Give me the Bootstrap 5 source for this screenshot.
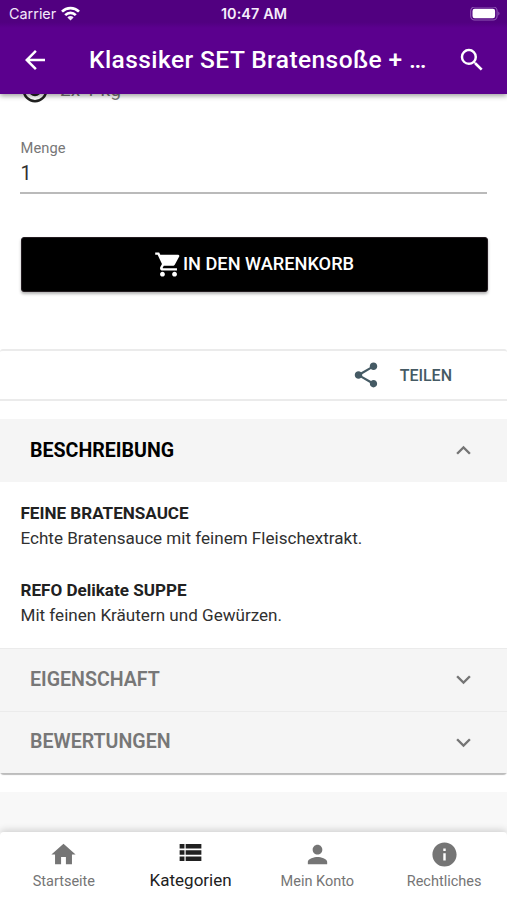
<!DOCTYPE html>
<html lang="de">
<head>
<meta charset="utf-8">
<meta name="viewport" content="width=device-width, initial-scale=1">
<title>Klassiker SET Bratensoße</title>
<link href="https://cdn.jsdelivr.net/npm/bootstrap@5.3.0/dist/css/bootstrap.min.css" rel="stylesheet">
<style>
body{font-family:Roboto,"Liberation Sans",sans-serif;color:#303030;line-height:1}
svg{display:block;flex:none;fill:currentColor}
.app-shell{width:507px;height:900px}
.app-header{height:94px;background:#5b008e;box-shadow:0 2px 5px rgba(0,0,0,.38);z-index:3}
.status-bar{height:28px;background:linear-gradient(#510080 80%,#5b008e);font:500 15px/28px Inter,sans-serif;padding:0 7px 0 9px;color:#f3e8fa}
.side-slot{flex:1 1 0}
.clock{font-weight:600;color:#f6eefb;font-size:14.4px;letter-spacing:.1px;margin-right:1px}
.carrier{font-size:14.4px;font-weight:400;letter-spacing:0}
.title-row{height:64px;padding:0 20px}
.page-title{font-size:24.5px;font-weight:500;letter-spacing:.43px;line-height:32px;margin-left:39px}
.page-main{background:#fff}
.option-row{height:28px;margin-top:-18px;padding-left:20px;gap:10px;font-size:19.2px;color:#757575}
.qty{margin:36px 20px 0;height:54px;border-bottom:2px solid #bababa;padding-left:.5px}
.qty-label{font-size:14.7px;color:#777;letter-spacing:.1px;line-height:16px}
.qty-value{font-size:19.6px;line-height:24px;margin-top:6px;color:#303030}
.cart-btn{margin:43px 19.5px 0 20.5px;height:54.5px;border:1px solid #231b20;border-radius:3px;background:#000;color:#fff;font-size:18.2px;font-weight:500;box-shadow:0 2px 3px rgba(0,0,0,.3)}
.share-row{margin-top:57.5px;height:52px;border-top:2px solid #ebebeb;border-bottom:2px solid #ebebeb;border-radius:3px 3px 0 0;padding-right:55px;color:#455a64;font-size:16px;font-weight:500;gap:19px}
.share-row span{padding-top:1px}
.panels{margin-top:18px;box-shadow:0 2px 1px #bcbcbc;border-radius:0 0 4px 4px}
.panel-head{height:62.5px;background:#f5f5f5;padding:0 29.5px 0 30px;font-size:19.6px;font-weight:600;color:#777}
.panel-head.open{height:63px;font-weight:700;color:#000}
.panel-head + .panel-head,.panel-body + .panel-head{border-top:1px solid #ebebeb}
.panel-head svg{color:#757575}
.panel-body{height:166px;padding:18.5px 20.5px 0;font-size:17.07px;line-height:25.7px}
.panel-body strong{color:#212121}
.next-block{margin-top:18.5px;height:60px;background:#f8f8f8}
.tabs-bar{height:68.5px;background:#fff;z-index:3;box-shadow:0 -2px 7px rgba(0,0,0,.16);border-radius:4px 4px 0 0;color:#757575;font-size:14.5px}
.tab-item{flex:1 1 0;padding:8px 0 0 1px}
.tab-item span{line-height:18px;margin-top:4px}
.tab-item.current{color:#212121;padding-top:6px}
.tab-item.current span{font-size:17px}
</style>
<script src="https://cdn.jsdelivr.net/npm/bootstrap@5.3.0/dist/js/bootstrap.bundle.min.js"></script>
</head>
<body>
<div class="app-shell d-flex flex-column overflow-hidden">
  <header class="app-header position-relative flex-shrink-0 text-white">
    <div class="status-bar d-flex align-items-center">
      <div class="side-slot d-flex align-items-center gap-1"><span class="carrier">Carrier</span>
        <svg width="21" height="16" viewBox="0 0 21 16" fill="none"><g fill="none" stroke="#fff" stroke-width="2.7"><path d="M2 5.6a12.2 12.2 0 0 1 17 0M5.2 9.1a7.6 7.6 0 0 1 10.6 0"/></g><path d="M10.5 14.4 7.4 11.4a4.4 4.4 0 0 1 6.2 0z"/></svg></div>
      <span class="clock">10:47 AM</span>
      <div class="side-slot d-flex justify-content-end">
        <svg width="30" height="15" viewBox="0 0 30 15"><rect x=".7" y="0" width="26.4" height="13" rx="4" fill="none" stroke="#9058b4" stroke-width="1.1"/><rect x="2.5" y="1.8" width="22.6" height="9.4" rx="2.2" fill="#fff"/><path d="M28.3 4.5a2.3 2.3 0 0 1 0 4z" fill="#9058b4"/></svg></div>
    </div>
    <div class="title-row d-flex align-items-center">
      <svg width="30" height="30" viewBox="0 0 24 24"><path d="M20 11H7.83l5.59-5.59L12 4l-8 8 8 8 1.41-1.41L7.83 13H20v-2z"/></svg>
      <h1 class="page-title mb-0 text-nowrap">Klassiker SET Bratensoße + …</h1>
      <svg class="ms-auto" width="30" height="30" viewBox="0 0 24 24"><path d="M15.5 14h-.79l-.28-.27A6.471 6.471 0 0 0 16 9.5 6.5 6.5 0 1 0 9.5 16c1.61 0 3.09-.59 4.23-1.57l.27.28v.79l5 4.99L20.49 19l-4.99-5zm-6 0C7.01 14 5 11.99 5 9.5S7.01 5 9.5 5 14 7.01 14 9.5 11.99 14 9.5 14z"/></svg>
    </div>
  </header>
  <main class="page-main flex-grow-1 overflow-hidden">
    <div class="option-row d-flex align-items-center">
      <svg width="30" height="30" viewBox="0 0 24 24" color="#212121"><path d="M12 7a5 5 0 1 0 0 10 5 5 0 0 0 0-10zm0-5a10 10 0 1 0 0 20 10 10 0 0 0 0-20zm0 18a8 8 0 1 1 0-16 8 8 0 0 1 0 16z"/></svg>
      <span>2x 1 kg</span>
    </div>
    <div class="qty"><div class="qty-label">Menge</div><div class="qty-value">1</div></div>
    <div class="cart-btn d-flex align-items-center justify-content-center">
      <svg width="29" height="29" viewBox="0 0 24 24"><path d="M7 18c-1.1 0-1.99.9-1.99 2S5.9 22 7 22s2-.9 2-2-.9-2-2-2zM1 2v2h2l3.6 7.59-1.35 2.45c-.16.28-.25.61-.25.96 0 1.1.9 2 2 2h12v-2H7.42c-.14 0-.25-.11-.25-.25l.03-.12.9-1.63h7.45c.75 0 1.41-.41 1.75-1.03l3.58-6.49A1.003 1.003 0 0 0 20 4H5.21l-.94-2H1zm16 16c-1.1 0-1.99.9-1.99 2s.89 2 1.99 2 2-.9 2-2-.9-2-2-2z"/></svg>
      <span>IN DEN WARENKORB</span>
    </div>
    <div class="share-row d-flex align-items-center justify-content-end">
      <svg width="30" height="30" viewBox="0 0 24 24"><path d="M18 16.08c-.76 0-1.44.3-1.96.77L8.91 12.7c.05-.23.09-.46.09-.7s-.04-.47-.09-.7l7.05-4.11c.54.5 1.25.81 2.04.81 1.66 0 3-1.34 3-3s-1.34-3-3-3-3 1.34-3 3c0 .24.04.47.09.7L8.04 9.81C7.5 9.31 6.79 9 6 9c-1.66 0-3 1.34-3 3s1.34 3 3 3c.79 0 1.5-.31 2.04-.81l7.12 4.16c-.05.21-.08.43-.08.65 0 1.61 1.31 2.92 2.92 2.92s2.92-1.31 2.92-2.92-1.31-2.92-2.92-2.92z"/></svg>
      <span>TEILEN</span>
    </div>
    <section class="panels">
      <div class="panel-head open d-flex align-items-center justify-content-between"><span>BESCHREIBUNG</span>
        <svg width="29" height="29" viewBox="0 0 24 24"><path d="m12 8-6 6 1.41 1.41L12 10.83l4.59 4.58L18 14z"/></svg></div>
      <div class="panel-body"><strong>FEINE BRATENSAUCE</strong><br>Echte Bratensauce mit feinem Fleischextrakt.<br><br><strong>REFO Delikate SUPPE</strong><br>Mit feinen Kräutern und Gewürzen.</div>
      <div class="panel-head d-flex align-items-center justify-content-between"><span>EIGENSCHAFT</span>
        <svg width="29" height="29" viewBox="0 0 24 24"><path d="M16.59 8.59 12 13.17 7.41 8.59 6 10l6 6 6-6z"/></svg></div>
      <div class="panel-head d-flex align-items-center justify-content-between"><span>BEWERTUNGEN</span>
        <svg width="29" height="29" viewBox="0 0 24 24"><path d="M16.59 8.59 12 13.17 7.41 8.59 6 10l6 6 6-6z"/></svg></div>
    </section>
    <div class="next-block"></div>
  </main>
  <nav class="tabs-bar position-relative flex-shrink-0 d-flex">
    <div class="tab-item d-flex flex-column align-items-center"><svg width="29" height="29" viewBox="0 0 24 24"><path d="M10 20v-6h4v6h5v-8h3L12 3 2 12h3v8z"/></svg><span>Startseite</span></div>
    <div class="tab-item current d-flex flex-column align-items-center"><svg width="29" height="29" viewBox="0 0 24 24"><path d="M3 8.6h4V5H3v3.600zm0 5.200h4v-3.600H3v3.600zm5 0h13v-3.600H8v3.600zM8 5v3.600h13V5H8zM3 19h4v-3.600H3V19zm5 0h13v-3.600H8V19z"/></svg><span>Kategorien</span></div>
    <div class="tab-item d-flex flex-column align-items-center"><svg width="29" height="29" viewBox="0 0 24 24"><path d="M12 12c2.21 0 4-1.79 4-4s-1.79-4-4-4-4 1.79-4 4 1.79 4 4 4zm0 2c-2.67 0-8 1.34-8 4v2h16v-2c0-2.66-5.33-4-8-4z"/></svg><span>Mein Konto</span></div>
    <div class="tab-item d-flex flex-column align-items-center"><svg width="29" height="29" viewBox="0 0 24 24"><path d="M12 2C6.48 2 2 6.48 2 12s4.48 10 10 10 10-4.48 10-10S17.52 2 12 2zm1 15h-2v-6h2v6zm0-8h-2V7h2v2z"/></svg><span>Rechtliches</span></div>
  </nav>
</div>
</body>
</html>
